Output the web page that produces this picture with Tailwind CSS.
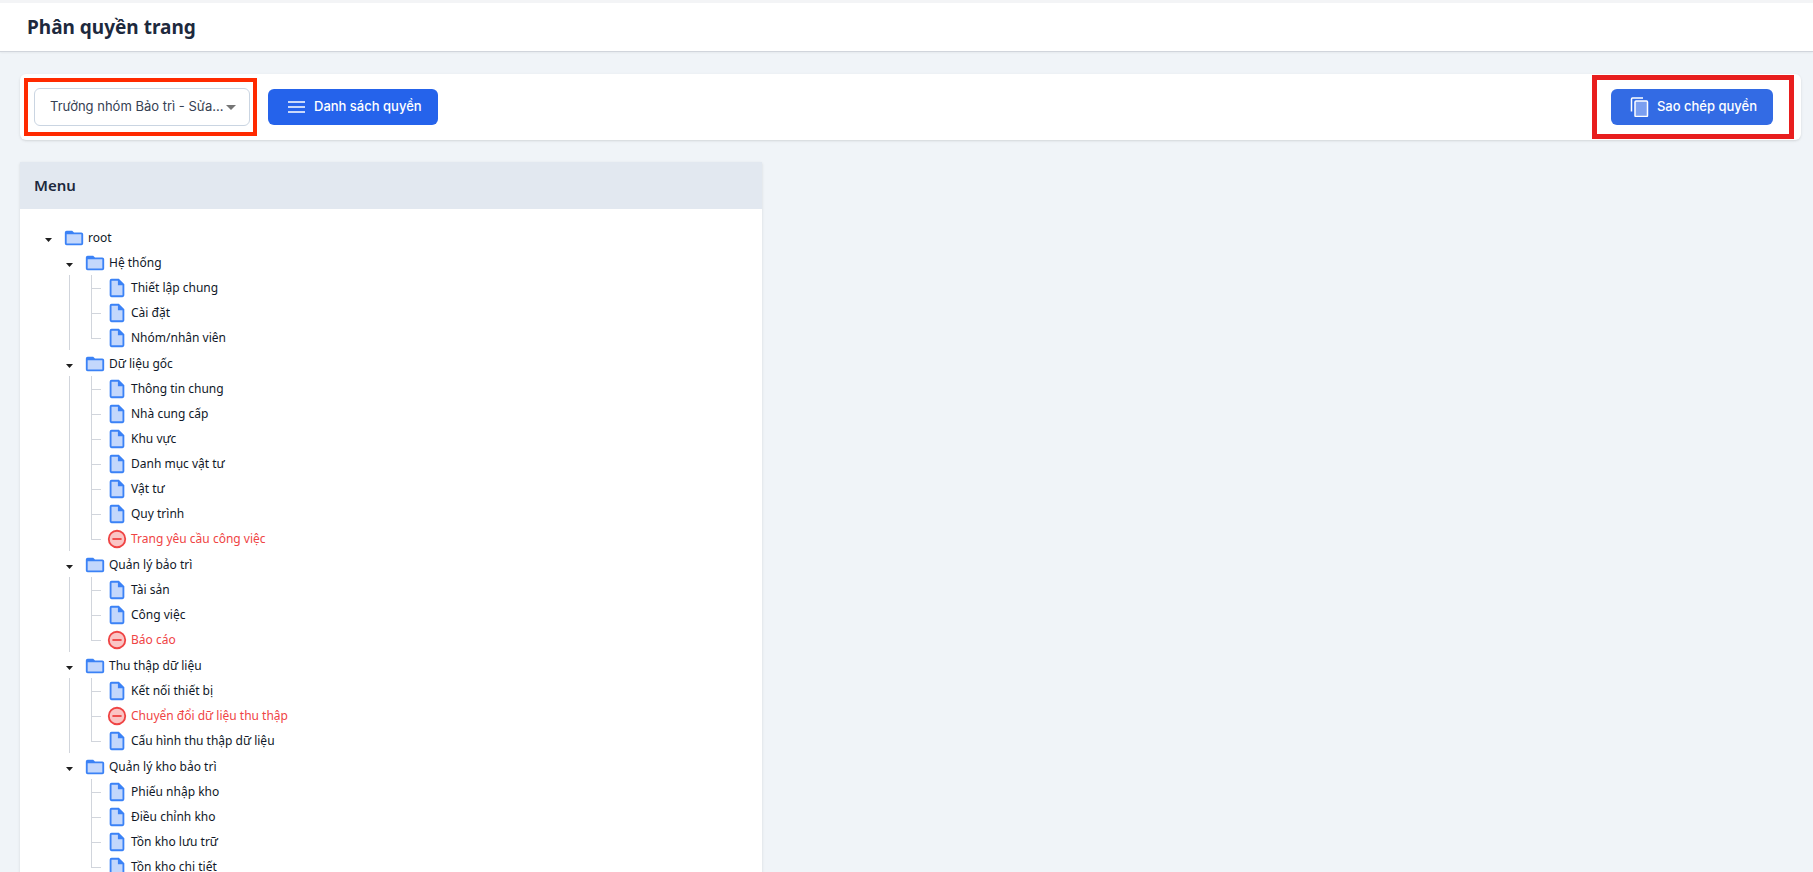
<!DOCTYPE html>
<html lang="vi">
  <head>
    <meta charset="UTF-8">
    <meta name="viewport" content="width=device-width, initial-scale=1.0">
    <title>Phân quyền trang</title>
    <script src="https://cdn.jsdelivr.net/npm/@tailwindcss/browser@4"></script>
  </head>

<body class="bg-[#f0f4f8] h-screen overflow-hidden font-['Noto_Sans',sans-serif] text-slate-800">

  <!-- Icons -->
  <svg class="hidden">
    <symbol id="icon-folder" viewBox="0 0 24 24">
      <path d="M3 7h18v12H3z" fill="#c3d7fc"/>
      <path d="M4 4h6l2 2h8a2 2 0 012 2v10a2 2 0 01-2 2H4a2 2 0 01-2-2V6a2 2 0 012-2zm0 4v10h16V8z" fill="#3b82f6" fill-rule="evenodd"/>
    </symbol>
    <symbol id="icon-file" viewBox="0 0 24 24">
      <path d="M5 3h9l5 5v13H5z" fill="#c3d7fc"/>
      <path d="M6 2h8l6 6v12a2 2 0 01-2 2H6a2 2 0 01-2-2V4a2 2 0 012-2zm0 2v16h12V9h-5V4z" fill="#3b82f6" fill-rule="evenodd"/>
    </symbol>
    <symbol id="icon-denied" viewBox="0 0 24 24">
      <circle cx="12" cy="12" r="9" fill="#fac5c5" stroke="#ef4444" stroke-width="2"/>
      <path d="M7 12h10" stroke="#ef4444" stroke-width="2"/>
    </symbol>
  </svg>

  <header class="border-t-3 border-b border-t-gray-100 border-b-gray-300 bg-white h-[52px] px-[27px] flex items-center shadow-xs">
    <h1 class="text-[19px] font-bold">Phân quyền trang</h1>
  </header>

  <main class="px-5 pr-3 pt-[22px]">
    <!-- Toolbar -->
    <div class="flex items-center bg-white rounded-md shadow-sm h-[66px] pl-1 pr-[7px]">
      <div class="border-4 border-[#ff2a00] py-[6px] pl-[6px] pr-[3px]">
        <div class="relative">
          <select aria-label="Nhóm quyền" class="appearance-none block w-[216px] h-[38px] border border-slate-300 rounded-md bg-white pl-[15px] pr-5 font-[Inter,sans-serif] text-[13px] text-gray-700">
            <option>Trưởng nhóm Bảo trì - Sửa...</option>
          </select>
          <svg class="absolute right-[14px] top-[17px] w-[10px] h-[5px] pointer-events-none" viewBox="0 0 10 5"><path d="M0 0h10L5 5z" fill="#757575"/></svg>
        </div>
      </div>
      <button class="ml-[11px] flex items-center gap-2 h-9 pl-[18px] pr-4 rounded-md bg-[#2563eb] text-white font-[Inter,sans-serif] text-[13px] font-medium">
        <svg class="w-5 h-5" viewBox="0 0 20 20" fill="none" stroke="currentColor" stroke-width="1.5"><path d="M2 5h17M2 10h17M2 15h17"/></svg>
        Danh sách quyền
      </button>
      <div class="ml-auto border-5 border-[#e81e1e] pl-[14px] pr-4 py-[9px]">
        <button class="flex items-center gap-2 h-9 pl-[18px] pr-4 rounded-md bg-[#336be4] text-white font-[Inter,sans-serif] text-[13px] font-medium">
          <svg class="w-5 h-5" viewBox="0 0 20 20" fill="none" stroke="currentColor" stroke-width="1.5"><path d="M2.5 14.5V2a1 1 0 011-1H14"/><rect x="6" y="4" width="12.5" height="15.5" rx="1" fill="#7b9ff0"/></svg>
          Sao chép quyền
        </button>
      </div>
    </div>

    <!-- Menu tree -->
    <div class="grid grid-cols-12 mt-[22px]">
      <section class="col-span-5 bg-white shadow-sm">
        <h2 class="bg-slate-200 h-[47px] px-[14px] flex items-center text-[15px] font-semibold">Menu</h2>
        <div id="tree" class="pl-[21px] pt-4 pb-4 text-xs text-gray-900"></div>
      </section>
    </div>
  </main>

  <script>
    const menu = [
      { name: 'Hệ thống', pages: ['Thiết lập chung', 'Cài đặt', 'Nhóm/nhân viên'] },
      { name: 'Dữ liệu gốc', pages: ['Thông tin chung', 'Nhà cung cấp', 'Khu vực', 'Danh mục vật tư', 'Vật tư', 'Quy trình', 'Trang yêu cầu công việc'] },
      { name: 'Quản lý bảo trì', pages: ['Tài sản', 'Công việc', 'Báo cáo'] },
      { name: 'Thu thập dữ liệu', pages: ['Kết nối thiết bị', 'Chuyển đổi dữ liệu thu thập', 'Cấu hình thu thập dữ liệu'] },
      { name: 'Quản lý kho bảo trì', pages: ['Phiếu nhập kho', 'Điều chỉnh kho', 'Tồn kho lưu trữ', 'Tồn kho chi tiết'] },
    ];
    const denied = ['Trang yêu cầu công việc', 'Báo cáo', 'Chuyển đổi dữ liệu thu thập'];

    const icon = (id) => `<svg class="w-[22px] h-[22px] shrink-0"><use href="#${id}"/></svg>`;

    const folderRow = (name) => `
      <div class="flex items-center h-[25px]">
        <button aria-label="Thu gọn ${name}" class="w-[15px] h-5 mr-[7px] pt-1 flex items-center justify-center">
          <svg class="w-[7px] h-1" viewBox="0 0 7 4"><path d="M0 0h7L3.5 4z" fill="#1f1f1f"/></svg>
        </button>
        ${icon('icon-folder')}
        <span class="ml-[3px]">${name}</span>
      </div>`;

    const pageRow = (name) => {
      const isDenied = denied.includes(name);
      return `
        <li class="group flex h-[25px]">
          <div class="w-px bg-gray-300 group-last:h-[14px]"></div>
          <div class="w-[9px] h-[14px] border-b border-gray-300 mr-[5px]"></div>
          <div class="flex items-center">
            ${icon(isDenied ? 'icon-denied' : 'icon-file')}
            <span class="${isDenied ? 'ml-[3px] text-[#ef4444]' : 'ml-[3px]'}">${name}</span>
          </div>
        </li>`;
    };

    const groupItem = (group) => `
      <li class="group/folder pb-px">
        ${folderRow(group.name)}
        <ul class="ml-[7px] pl-[21px] border-l border-gray-300 group-last/folder:border-transparent">
          ${group.pages.map(pageRow).join('')}
        </ul>
      </li>`;

    document.getElementById('tree').innerHTML = `
      ${folderRow('root')}
      <ul class="pl-[21px]">${menu.map(groupItem).join('')}</ul>`;
  </script>
</body>
</html>
